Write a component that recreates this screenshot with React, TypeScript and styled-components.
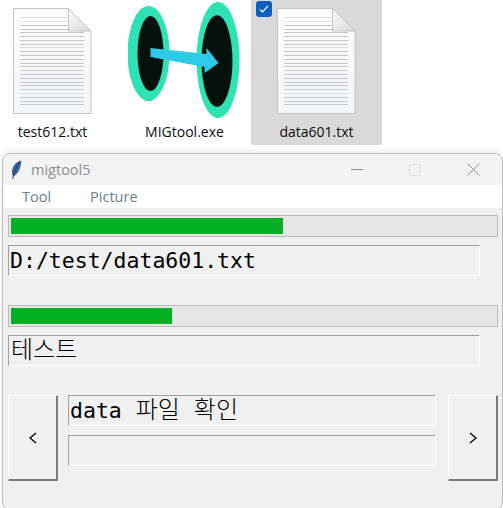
import React from 'react';
import styled, { createGlobalStyle } from 'styled-components';

const Global = createGlobalStyle`
  html, body { margin: 0; padding: 0; background: #fff; }
  body { width: 503px; height: 508px; overflow: hidden; font-family: "Noto Sans", sans-serif; }
  * { box-sizing: border-box; }
`;

const Page = styled.div`
  width: 503px;
  height: 508px;
  overflow: hidden;
  display: flex;
  flex-direction: column;
  background: #fff;
`;

const Files = styled.div`
  height: 153px;
  flex: none;
  margin-left: -13px;
  display: grid;
  grid-template-columns: 131px 131px 131px;
  column-gap: 1px;
  align-items: start;
`;

const Tile = styled.div<{ $selected?: boolean }>`
  position: relative;
  height: 145px;
  display: flex;
  flex-direction: column;
  align-items: center;
  border-radius: 0 0 2px 2px;
  background: ${p => (p.$selected ? '#d9d9d9' : 'transparent')};
`;

const IconSlot = styled.div`
  height: 122px;
  display: flex;
  align-items: flex-start;
  justify-content: center;
`;

const FileName = styled.div`
  font-family: "Open Sans", "Noto Sans", sans-serif;
  font-size: 14px;
  line-height: 20px;
  color: #0c0c14;
`;

const Check = styled.div`
  position: absolute;
  left: 5px;
  top: 1px;
  width: 16px;
  height: 16px;
  border-radius: 3px;
  background: #0a60c0;
  display: flex;
  align-items: center;
  justify-content: center;
`;

const LINES = [17, 21, 25, 29, 32, 36, 40, 44, 47, 51, 55, 59, 63, 66, 70, 74, 78, 82, 85, 89, 93, 97, 101, 104];

const Doc = () => (
  <svg width="79" height="115" viewBox="0 0 79 115">
    <defs>
      <linearGradient id="pg" x1="0" y1="0" x2="0" y2="1">
        <stop offset="0" stopColor="#fdfdfd" />
        <stop offset="1" stopColor="#f3f4f6" />
      </linearGradient>
      <linearGradient id="fd" x1="0" y1="0" x2="1" y2="1">
        <stop offset="0" stopColor="#fafafa" />
        <stop offset="1" stopColor="#dadada" />
      </linearGradient>
    </defs>
    <path d="M.5 8.500H55.500L78 31V113.500H.5Z" fill="url(#pg)" stroke="#c4c4c4" />
    {LINES.map((y, i) => (
      <rect
        key={y}
        x={7}
        y={y}
        width={i < 4 ? 48 : 64}
        height={1}
        fill={i === 0 || i === 1 || i === 8 || i === 20 ? '#dedfe1' : '#c6c7c9'}
      />
    ))}
    <path d="M55.500 8.500V31H78Z" fill="url(#fd)" stroke="#c4c4c4" />
  </svg>
);

const Portal = () => (
  <svg width="114" height="120" viewBox="0 0 114 120">
    <ellipse cx="20.500" cy="53.500" rx="21" ry="47.500" fill="#2de2b3" />
    <ellipse cx="22.500" cy="53.500" rx="13" ry="37.500" fill="#04120e" />
    <ellipse cx="90" cy="60" rx="21.500" ry="58" fill="#2de2b3" />
    <ellipse cx="89" cy="61" rx="15.500" ry="46" fill="#04120e" />
    <path d="M22.500 48L78.500 54V48L90.500 63L76.500 73V67L22.500 57Z" fill="#2dcbe8" />
  </svg>
);

const Win = styled.div`
  flex: none;
  height: 357px;
  margin-left: 2px;
  width: 501px;
  background: #f0f0f0;
  border: 1px solid #bdbdbd;
  border-radius: 8px;
  box-shadow: 0 -2px 7px rgba(0, 0, 0, 0.07);
  display: flex;
  flex-direction: column;
  overflow: hidden;
`;

const TitleBar = styled.div`
  height: 31px;
  flex: none;
  background: #f3f3f3;
  display: flex;
  align-items: center;
  padding-left: 8px;
`;

const Title = styled.div`
  flex: 1;
  margin-left: 9px;
  font-family: "Open Sans", "Noto Sans", sans-serif;
  font-size: 14.500px;
  color: #8c8c8c;
`;

const WinBtn = styled.div`
  width: 58px;
  height: 31px;
  flex: none;
  display: flex;
  align-items: center;
  justify-content: center;
`;

const MenuBar = styled.div`
  height: 23px;
  flex: none;
  background: #fff;
  display: flex;
  align-items: center;
  padding-left: 19px;
  gap: 39px;
  font-family: "Open Sans", "Noto Sans", sans-serif;
  font-size: 14.500px;
  color: #6d7f96;
`;

const Body = styled.div`
  flex: 1;
  display: flex;
  flex-direction: column;
  padding: 7px 4px 0 5px;
`;

const Progress = styled.div`
  width: 490px;
  height: 22px;
  flex: none;
  background: #e6e6e6;
  border: 1px solid #bcbcbc;
  padding: 2px;
`;

const Fill = styled.div`
  height: 100%;
  background: #06b025;
`;

const Sunken = styled.div<{ $width: number }>`
  width: ${p => p.$width}px;
  height: 31px;
  flex: none;
  border-top: 1px solid #a0a0a0;
  border-left: 1px solid #a0a0a0;
  border-right: 1px solid #fff;
  border-bottom: 1px solid #fff;
  padding-left: 1px;
  font-family: "DejaVu Sans Mono", "Noto Sans CJK KR", monospace;
  font-size: 21.500px;
  line-height: 29px;
  color: #000;
  white-space: pre;
`;

const Hangul = styled.span`
  font-family: "Noto Sans CJK KR", sans-serif;
  font-size: 24px;
  font-weight: 300;
  line-height: 0;
  margin-left: 1px;
`;

const Section = styled.div<{ $top: number }>`
  margin-top: ${p => p.$top}px;
  display: flex;
  flex-direction: column;
  gap: 8px;
`;

const Controls = styled.div`
  margin-top: 29px;
  display: grid;
  grid-template-columns: 50px 1fr 50px;
  column-gap: 10px;
  width: 490px;
`;

const Nav = styled.div`
  height: 86px;
  background: #f0f0f0;
  border-top: 1px solid #fff;
  border-left: 1px solid #fff;
  border-right: 2px solid #7c7c7c;
  border-bottom: 2px solid #7c7c7c;
  display: flex;
  align-items: center;
  justify-content: center;
`;

const Stack = styled.div`
  display: flex;
  flex-direction: column;
  gap: 9px;
  padding-right: 2px;
`;

const Feather = () => (
  <svg width="11" height="20" viewBox="0 0 11 20">
    <path d="M10.200 .5C5.500 1.500 1.800 5.500 .9 11c-.3 2 .2 3.500 1 4.500L1.200 19h1.200l.8-3C7 14 10.500 7 10.200 .5Z" fill="#3f659a" />
    <path d="M2.500 16C3.500 11 6 6 8.500 2.500" stroke="#1d2b44" strokeWidth=".8" fill="none" />
  </svg>
);

const Arrow = ({ flip }: { flip?: boolean }) => (
  <svg width="8" height="12" viewBox="0 0 8 12">
    <path d={flip ? 'M1 1L7 6 1 11' : 'M7 1L1 6 7 11'} stroke="#000" strokeWidth="1.300" fill="none" />
  </svg>
);

export default function App() {
  return (
    <Page>
      <Global />
      <Files>
        <Tile>
          <IconSlot><Doc /></IconSlot>
          <FileName>test612.txt</FileName>
        </Tile>
        <Tile>
          <IconSlot><Portal /></IconSlot>
          <FileName>MIGtool.exe</FileName>
        </Tile>
        <Tile $selected>
          <Check>
            <svg width="10" height="8" viewBox="0 0 10 8">
              <path d="M1 4.500L3.500 7 9 1" stroke="#fff" strokeWidth="1.200" fill="none" />
            </svg>
          </Check>
          <IconSlot><Doc /></IconSlot>
          <FileName>data601.txt</FileName>
        </Tile>
      </Files>
      <Win>
        <TitleBar>
          <Feather />
          <Title>migtool5</Title>
          <WinBtn>
            <svg width="12" height="2" viewBox="0 0 12 2"><rect width="12" height="1" fill="#8c8c8c" /></svg>
          </WinBtn>
          <WinBtn>
            <svg width="12" height="12" viewBox="0 0 12 12"><rect x=".5" y=".5" width="11" height="11" rx="1.500" fill="none" stroke="#dcdcdc" /></svg>
          </WinBtn>
          <WinBtn>
            <svg width="13" height="13" viewBox="0 0 13 13"><path d="M.5 .5L12.500 12.500M12.500 .5L.5 12.500" stroke="#8c8c8c" fill="none" /></svg>
          </WinBtn>
        </TitleBar>
        <MenuBar>
          <span>Tool</span>
          <span>Picture</span>
        </MenuBar>
        <Body>
          <Section $top={0}>
            <Progress><Fill style={{ width: '56.200%' }} /></Progress>
            <Sunken $width={472}>D:/test/data601.txt</Sunken>
          </Section>
          <Section $top={29}>
            <Progress><Fill style={{ width: '33.260%' }} /></Progress>
            <Sunken $width={472}><Hangul>테스트</Hangul></Sunken>
          </Section>
          <Controls>
            <Nav><Arrow /></Nav>
            <Stack>
              <Sunken $width={368}>data <Hangul>파일</Hangul> <Hangul>확인</Hangul></Sunken>
              <Sunken $width={368} />
            </Stack>
            <Nav><Arrow flip /></Nav>
          </Controls>
        </Body>
      </Win>
    </Page>
  );
}
